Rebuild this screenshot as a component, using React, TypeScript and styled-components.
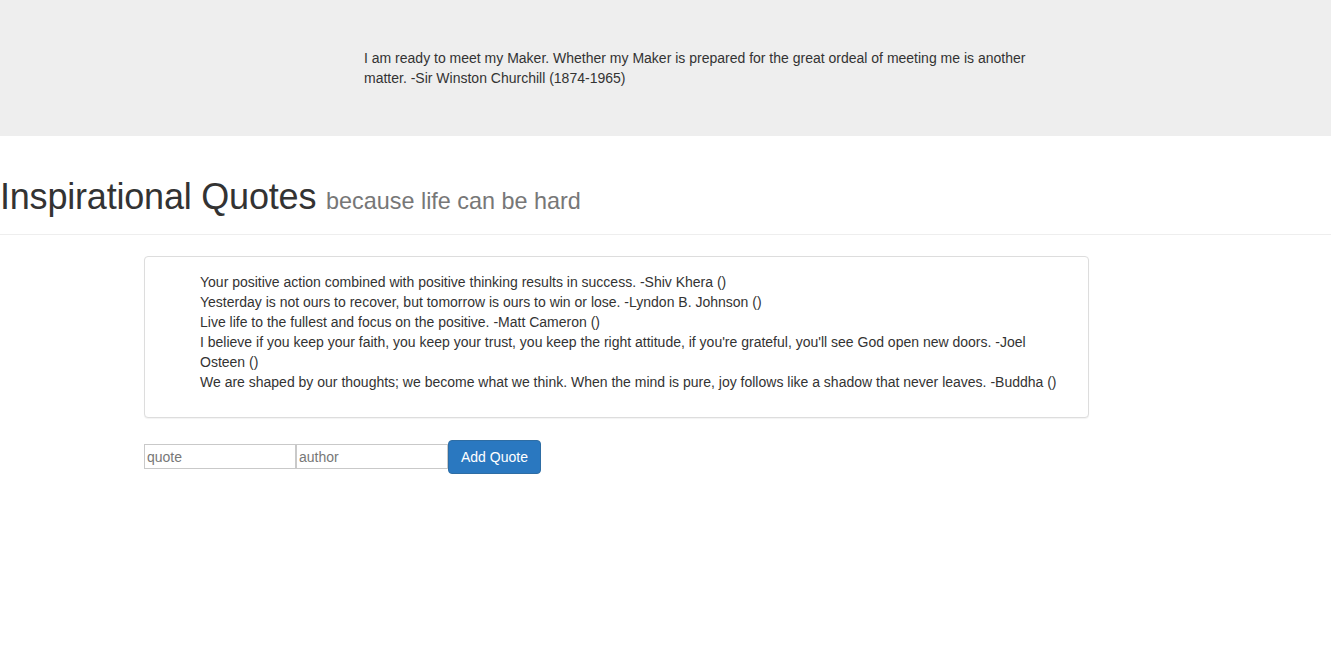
import React from "react";
import styled, { createGlobalStyle } from "styled-components";

const Global = createGlobalStyle`
  html, body { margin: 0; padding: 0; background: #fff; }
  body {
    font-family: "Liberation Sans", Arial, Helvetica, sans-serif;
    font-size: 14px;
    line-height: 20px;
    color: #333;
  }
  * { box-sizing: border-box; }
`;

const Jumbotron = styled.div`
  background: #eeeeee;
  padding: 48px 0 48px;
  margin-bottom: 40px;
`;

const FeaturedQuote = styled.p`
  margin: 0 0 0 364px;
  width: 680px;
  font-size: 14px;
  line-height: 20px;
  color: #333;
`;

const PageHeader = styled.div`
  padding-top: 1px;
  padding-bottom: 7px;
  margin: 0 0 21px;
  border-bottom: 1px solid #eee;
`;

const Title = styled.h1`
  margin: 0 0 10px;
  font-size: 36px;
  font-weight: 500;
  line-height: 1.1;
  color: #333;
  letter-spacing: -0.2px;
`;

const Subtitle = styled.small`
  font-size: 65%;
  font-weight: 400;
  line-height: 1;
  color: #777;
  letter-spacing: 0;
`;

const Content = styled.div`
  margin-left: 144px;
  width: 945px;
`;

const Panel = styled.div`
  border: 1px solid #ddd;
  border-radius: 4px;
  box-shadow: 0 1px 1px rgba(0, 0, 0, 0.05);
  background: #fff;
  margin-bottom: 22px;
`;

const PanelBody = styled.div`
  padding: 15px;
`;

const QuoteList = styled.ul`
  list-style: none;
  margin: 0 0 10px;
  padding: 0 0 0 40px;
`;

const QuoteItem = styled.li`
  font-size: 14px;
  line-height: 20px;
  color: #333;
`;

const Form = styled.form`
  display: flex;
  align-items: center;
`;

const Field = styled.input`
  width: 152px;
  height: 25px;
  border: 1px solid #c9c9c9;
  padding: 1px 2px;
  font-family: "Liberation Sans", Arial, sans-serif;
  font-size: 14px;
  color: #333;
  background: #fff;
  outline: none;
  &::placeholder { color: #777; }
`;

const Button = styled.button`
  height: 34px;
  padding: 6px 12px;
  font-family: "Liberation Sans", Arial, sans-serif;
  font-size: 14px;
  line-height: 20px;
  color: #fff;
  background: #2a78c0;
  border: 1px solid #2e6da4;
  border-radius: 4px;
  cursor: pointer;
`;

const quotes = [
  "Your positive action combined with positive thinking results in success. -Shiv Khera ()",
  "Yesterday is not ours to recover, but tomorrow is ours to win or lose. -Lyndon B. Johnson ()",
  "Live life to the fullest and focus on the positive. -Matt Cameron ()",
  "I believe if you keep your faith, you keep your trust, you keep the right attitude, if you're grateful, you'll see God open new doors. -Joel Osteen ()",
  "We are shaped by our thoughts; we become what we think. When the mind is pure, joy follows like a shadow that never leaves. -Buddha ()",
];

export default function App() {
  return (
    <>
      <Global />
      <Jumbotron>
        <FeaturedQuote>
          I am ready to meet my Maker. Whether my Maker is prepared for the great ordeal of meeting me is another
          matter. -Sir Winston Churchill (1874-1965)
        </FeaturedQuote>
      </Jumbotron>
      <PageHeader>
        <Title>
          Inspirational Quotes <Subtitle>because life can be hard</Subtitle>
        </Title>
      </PageHeader>
      <Content>
        <Panel>
          <PanelBody>
            <QuoteList>
              {quotes.map((q) => (
                <QuoteItem key={q}>{q}</QuoteItem>
              ))}
            </QuoteList>
          </PanelBody>
        </Panel>
        <Form onSubmit={(e) => e.preventDefault()}>
          <Field placeholder="quote" />
          <Field placeholder="author" />
          <Button type="submit">Add Quote</Button>
        </Form>
      </Content>
    </>
  );
}
